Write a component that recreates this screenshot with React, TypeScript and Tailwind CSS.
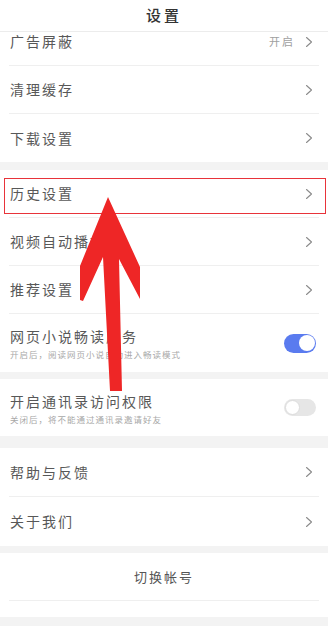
import React from "react";

const font = { fontFamily: '"Noto Sans CJK SC", "Noto Sans", sans-serif' };

function Chevron() {
  return (
    <svg width="8" height="12" viewBox="0 0 8 12" className="shrink-0">
      <path d="M1.5 1.5 L6.5 6 L1.5 10.5" fill="none" stroke="#8a8a8a" strokeWidth="1.1" strokeLinecap="round" strokeLinejoin="round" />
    </svg>
  );
}

function Row({ label, value, divider = true, h = "h-[47px]" }: { label: string; value?: string; divider?: boolean; h?: string }) {
  return (
    <div className="relative bg-white">
      <div className={"flex items-center justify-between pl-[10px] pr-[15px] " + h}>
        <span className="text-[14px] tracking-[2px] text-[#585858]">{label}</span>
        <div className="flex items-center gap-[10px]">
          {value && <span className="text-[11px] tracking-[2px] text-[#a0a0a0]">{value}</span>}
          <Chevron />
        </div>
      </div>
      {divider && <div className="mx-[9px] h-px bg-[#efefef]" />}
    </div>
  );
}

function Toggle({ on }: { on: boolean }) {
  return on ? (
    <div className="flex h-[19px] w-[32px] items-center justify-end rounded-full bg-[#5a7bef] pr-[1.5px]">
      <div className="h-[16px] w-[16px] rounded-full bg-white" />
    </div>
  ) : (
    <div className="flex h-[17px] w-[32px] items-center rounded-full bg-[#e6e6e6] pl-px">
      <div className="h-[15px] w-[15px] rounded-full border border-[#dcdcdc] bg-white" />
    </div>
  );
}

function SwitchRow({ title, sub, on, h }: { title: string; sub: string; on: boolean; h: string }) {
  return (
    <div className={"flex items-center justify-between bg-white pl-[10px] pr-[12px] " + h}>
      <div className="flex flex-col gap-[2px]">
        <span className="text-[14px] leading-[20px] tracking-[2px] text-[#585858]">{title}</span>
        <span className="text-[8.5px] leading-[12px] tracking-[1px] text-[#a8a8a8]">{sub}</span>
      </div>
      <Toggle on={on} />
    </div>
  );
}

export default function App() {
  return (
    <div className="relative h-[626px] w-[328px] overflow-hidden bg-white" style={font}>
      <div className="relative z-10 flex h-[32px] items-center justify-center border-b border-[#ececec] bg-white">
        <span className="text-[15px] font-medium tracking-[3px] text-[#333]">设置</span>
      </div>
      <div className="-mt-[14px] flex flex-col">
        <Row label="广告屏蔽" value="开启" />
        <Row label="清理缓存" />
        <Row label="下载设置" divider={false} h="h-[48px]" />
        <div className="h-[8px] bg-[#f3f3f3]" />
        <Row label="历史设置" />
        <Row label="视频自动播放" />
        <Row label="推荐设置" />
        <SwitchRow title="网页小说畅读服务" sub="开启后，阅读网页小说自动进入畅读模式" on h="h-[58px]" />
        <div className="h-[7px] bg-[#f3f3f3]" />
        <SwitchRow title="开启通讯录访问权限" sub="关闭后，将不能通过通讯录邀请好友" on={false} h="h-[57px]" />
        <div className="h-[12px] bg-[#f3f3f3]" />
        <Row label="帮助与反馈" h="h-[48px]" />
        <Row label="关于我们" divider={false} h="h-[49px]" />
        <div className="h-[7px] bg-[#f3f3f3]" />
        <div className="bg-white">
          <div className="flex h-[47px] items-center justify-center">
            <span className="text-[13px] tracking-[2px] text-[#555]">切换帐号</span>
          </div>
          <div className="mx-[9px] h-px bg-[#efefef]" />
          <div className="h-[16px]" />
        </div>
        <div className="h-[20px] bg-[#f3f3f3]" />
      </div>

      {/* annotation box */}
      <div className="pointer-events-none absolute left-[4px] top-[178px] h-[36px] w-[322px] border-[1.5px] border-[#e8333a]" />
      {/* annotation arrow */}
      <svg className="pointer-events-none absolute left-0 top-0" width="328" height="626" viewBox="0 0 328 626">
        <polygon
          points="108,197 140,267 140,299 119,259 122,391 110,391 103,257 83,301 80,300 80,266"
          fill="#ee2626"
        />
      </svg>
    </div>
  );
}
